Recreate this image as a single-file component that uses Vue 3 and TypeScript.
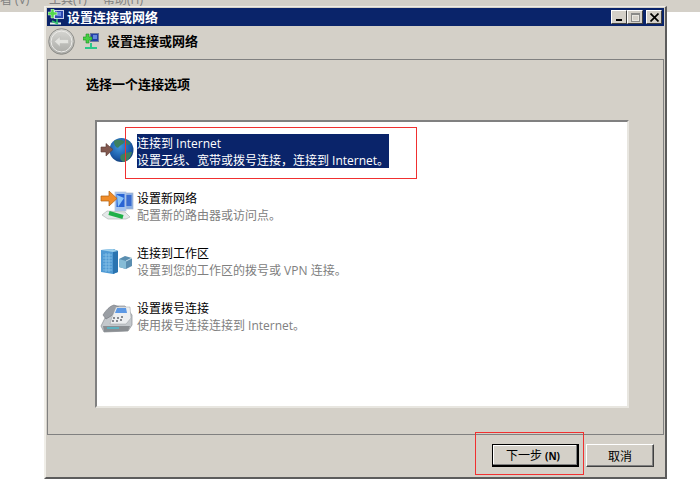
<script setup lang="ts">
interface ConnectOption {
  key: string
  title: string
  desc: string
  selected?: boolean
}

const options: ConnectOption[] = [
  { key: 'internet', title: '连接到 Internet', desc: '设置无线、宽带或拨号连接，连接到 Internet。', selected: true },
  { key: 'network', title: '设置新网络', desc: '配置新的路由器或访问点。' },
  { key: 'work', title: '连接到工作区', desc: '设置到您的工作区的拨号或 VPN 连接。' },
  { key: 'dial', title: '设置拨号连接', desc: '使用拨号连接连接到 Internet。' },
]
</script>

<template>
  <div class="desktop">
    <div class="menubar">
      <span>看 (V)</span>
      <span>工具(T)</span>
      <span>帮助(H)</span>
    </div>

    <div class="window">
      <div class="titlebar">
        <svg class="title-icon" width="16" height="16" viewBox="0 0 16 16">
          <rect x="6.5" y="1.5" width="9" height="8" fill="#2c48b0" stroke="#c8d0e8" />
          <rect x="9" y="3" width="4" height="4" fill="#6a8ce0" />
          <path d="M3 0h3v3h3v3H6v3H3V6H0V3h3z" fill="#52d84c" stroke="#fff" stroke-width=".5" />
          <path d="M2 14.5h11" stroke="#e8f4ec" stroke-width="2" />
          <path d="M9 10v4M4 12l6 3" stroke="#34c070" stroke-width="1.6" />
        </svg>
        <span class="title-text">设置连接或网络</span>
        <div class="caption-btns">
          <button class="caption-btn"><i class="glyph-min"></i></button>
          <button class="caption-btn"><i class="glyph-max"></i></button>
          <button class="caption-btn close">
            <svg width="9" height="9" viewBox="0 0 9 9"><path d="M.5.5l8 8M8.5.5l-8 8" stroke="#000" stroke-width="1.7" /></svg>
          </button>
        </div>
      </div>

      <div class="navrow">
        <svg class="back" width="27" height="27" viewBox="0 0 27 27">
          <defs>
            <linearGradient id="backFill" x1="0" y1="0" x2="0" y2="1">
              <stop offset="0" stop-color="#d8d8d4" />
              <stop offset="1" stop-color="#aaaaa6" />
            </linearGradient>
          </defs>
          <circle cx="13.5" cy="13.5" r="12.8" fill="url(#backFill)" stroke="#8c8c88" />
          <circle cx="13.5" cy="13.5" r="10.4" fill="none" stroke="#ecebe8" />
          <path d="M6.5 13.5l5.5-5v3h8.5v4H12v3z" fill="#e4e4e0" stroke="#bdbdb9" stroke-width=".5" />
        </svg>
        <svg class="nav-icon" width="16" height="16" viewBox="0 0 16 16">
          <rect x="7.5" y=".5" width="8" height="8" fill="#2440a8" stroke="#6c7a9c" />
          <rect x="10" y="2" width="4" height="4" fill="#6488dc" />
          <path d="M3 1h3v3h3v3H6v3H3V7H0V4h3z" fill="#46d044" stroke="#1f8a22" stroke-width=".6" />
          <path d="M2 15h12" stroke="#2cc888" stroke-width="2" />
          <path d="M8 10v4" stroke="#2cc888" stroke-width="2" />
        </svg>
        <span class="nav-title">设置连接或网络</span>
      </div>

      <div class="panel">
        <h2 class="heading">选择一个连接选项</h2>
        <div class="listbox">
          <div v-for="opt in options" :key="opt.key" class="option">
            <svg v-if="opt.key === 'internet'" class="opt-icon" width="36" height="36" viewBox="0 0 36 36">
              <defs>
                <radialGradient id="globe" cx=".42" cy=".36" r=".72">
                  <stop offset="0" stop-color="#3f96dc" />
                  <stop offset=".65" stop-color="#1a5aa8" />
                  <stop offset="1" stop-color="#0f3468" />
                </radialGradient>
              </defs>
              <circle cx="21.5" cy="16" r="12" fill="url(#globe)" />
              <path d="M14 7c4-2 7-1 10 0 1 3-3 3-5 6-2 2-5-1-5-6zM21 21c3-2 7-3 11-3-1 5-4 9-8 10-3-1-5-4-3-7zM25 6c2 0 4 2 6 4l-4 1z" fill="#3c8060" />
              <path d="M1 13h5V9.500l7 6-7 6.500v-4H1z" fill="#80584e" stroke="#5a3a34" stroke-width=".6" />
            </svg>
            <svg v-else-if="opt.key === 'network'" class="opt-icon" width="36" height="36" viewBox="0 0 36 36">
              <rect x="24" y="4" width="9" height="16" fill="#8cb0e4" stroke="#a8b4c8" stroke-width=".7" />
              <rect x="25.500" y="6" width="6" height="11" fill="#3a6cd0" />
              <rect x="15" y="3" width="11" height="19" fill="#a4c4f0" stroke="#b8c4d8" stroke-width=".7" />
              <rect x="16.500" y="5" width="8" height="13" fill="#2a64d4" />
              <path d="M17 6l7 3-6 9z" fill="#8cc4f8" />
              <path d="M1 7h8V2l8 7.500L9 17v-5H1z" fill="#f08c28" stroke="#b0600e" stroke-width=".7" />
              <path d="M2 26l5-4 18 1 5 5-4 2H8z" fill="#e4e8e8" stroke="#a8acac" stroke-width=".6" />
              <path d="M9 24l14 4" stroke="#20b048" stroke-width="4" />
            </svg>
            <svg v-else-if="opt.key === 'work'" class="opt-icon" width="36" height="36" viewBox="0 0 36 36">
              <path d="M1 6l12-1 5 2v21l-5 2-12-2z" fill="#4f9ad4" />
              <path d="M13 5l5 2v21l-5 2z" fill="#2a74b0" />
              <path d="M1 6l12-1 5 2-5 1z" fill="#9cd0ec" />
              <path d="M3 11h9M3 14h9M3 17h9M3 20h9M3 23h9M3 26h9M6 9v19M9 9v19" stroke="#8cc4e8" stroke-width=".8" />
              <path d="M19 15l6-3 7 2v8l-6 3-7-2z" fill="#5a8eb0" />
              <path d="M19 15l7 2v8l-7-2z" fill="#86bcd6" />
              <path d="M26 17l6-3" stroke="#c8e0ec" />
            </svg>
            <svg v-else class="opt-icon" width="36" height="36" viewBox="0 0 36 36">
              <path d="M1 27l6-12 8-8h10l7 9v10l-4 6-24 1z" fill="#c4c8cc" stroke="#8a8e92" stroke-width=".7" />
              <path d="M3 16c3-5 7-9 11-10l5 2-8 9-5 3z" fill="#9a9ea4" stroke="#70747a" stroke-width=".6" />
              <path d="M12 18l4-10h14l1 11-5 6H10z" fill="#eceef0" stroke="#9a9ea2" stroke-width=".5" />
              <path d="M17 9h9l1 5H15z" fill="#5c98e4" />
              <path d="M13 19h2M17 19h2M21 18h2M12 22h2M16 22h2M20 21h2" stroke="#666a70" stroke-width="1.3" />
              <path d="M3 27h27l-2 5-24 1z" fill="#8a8e92" />
              <path d="M7 29h12" stroke="#48c0d4" stroke-width="1.4" />
            </svg>
            <div class="opt-text" :class="{ selected: opt.selected }">
              <div class="opt-title">{{ opt.title }}</div>
              <div class="opt-desc">{{ opt.desc }}</div>
            </div>
          </div>
        </div>
      </div>

      <div class="footer">
        <button class="btn default">下一步 <span class="hotkey">(N)</span></button>
        <button class="btn">取消</button>
      </div>
    </div>

    <div class="mark mark-option"></div>
    <div class="mark mark-next"></div>
  </div>
</template>

<style>
html,
body {
  margin: 0;
  background: #fff;
}
</style>

<style scoped>
.desktop {
  position: relative;
  width: 700px;
  height: 486px;
  overflow: hidden;
  background: #fff;
  font-family: "Open Sans", "Noto Sans CJK SC", sans-serif;
  font-size: 12px;
  color: #000;
}

.menubar {
  height: 12px;
  background: #d4d0c8;
  display: flex;
  overflow: hidden;
  color: #808080;
  line-height: 12px;
}

.menubar span {
  position: relative;
  top: -6px;
  white-space: nowrap;
}

.menubar span:nth-child(1) {
  width: 49px;
}

.menubar span:nth-child(2) {
  width: 54px;
}

.window {
  position: absolute;
  left: 44px;
  top: 6px;
  width: 623px;
  height: 473px;
  box-sizing: border-box;
  display: flex;
  flex-direction: column;
  background: #d4d0c8;
  border-top: 1px solid #f0eee8;
  border-left: 2px solid #f0eee8;
  border-right: 2px solid #5c5c5c;
  border-bottom: 2px solid #5c5c5c;
  padding: 1px 1px 0 1px;
}

.titlebar {
  height: 18px;
  background: #0a246a;
  display: flex;
  align-items: center;
  padding-right: 2px;
  flex: none;
}

.title-icon {
  flex: none;
  margin-left: 1px;
}

.title-text {
  margin-left: 3px;
  color: #fff;
  font-size: 13px;
  line-height: 16px;
  font-weight: 700;
}

.caption-btns {
  margin-left: auto;
  display: flex;
}

.caption-btn {
  width: 16px;
  height: 14px;
  padding: 0;
  box-sizing: border-box;
  background: #d4d0c8;
  border: 1px solid;
  border-color: #fff #404040 #404040 #fff;
  display: flex;
  align-items: center;
  justify-content: center;
}

.caption-btn.close {
  margin-left: 3px;
}

.glyph-min {
  display: block;
  width: 6px;
  height: 2px;
  background: #000;
  margin-top: 6px;
}

.glyph-max {
  display: block;
  width: 9px;
  height: 9px;
  box-sizing: border-box;
  border: 1px solid #8a8a88;
  border-top-width: 2px;
  box-shadow: inset 0 0 0 1px #e8e6e0;
}

.navrow {
  height: 33px;
  flex: none;
  box-sizing: border-box;
  display: flex;
  align-items: center;
  padding: 0 0 3px 1px;
}

.back,
.nav-icon,
.opt-icon {
  display: block;
  flex: none;
}

.nav-icon {
  margin-left: 8px;
}

.nav-title {
  margin-left: 8px;
  font-size: 13px;
  line-height: 16px;
  font-weight: 700;
}

.panel {
  height: 376px;
  width: 617px;
  flex: none;
  box-sizing: border-box;
  border: 1px solid #808080;
  padding: 16px 0 0 47px;
  display: flex;
  flex-direction: column;
}

.heading {
  margin: 0 0 28px -9px;
  font-size: 13px;
  line-height: 16px;
  font-weight: 700;
}

.listbox {
  height: 288px;
  width: 534px;
  box-sizing: border-box;
  border: 2px solid;
  border-color: #808080 #e8e6e0 #e8e6e0 #808080;
  background: #fff;
  padding: 12px 0 0 3px;
  display: flex;
  flex-direction: column;
  gap: 21px;
}

.option {
  display: flex;
  align-items: flex-start;
  height: 34px;
}

.opt-icon {
  margin-right: 1px;
}

.opt-text {
  height: 34px;
  box-sizing: border-box;
  padding-top: 1px;
  line-height: 17px;
  color: #808080;
}

.opt-title {
  color: #000;
}

.opt-text.selected {
  background: #0a246a;
  color: #fff;
}

.opt-text.selected .opt-title {
  color: #fff;
}

.footer {
  flex: 1;
  display: flex;
  justify-content: flex-end;
  align-items: flex-start;
  gap: 7px;
  padding: 9px 10px 0 0;
}

.btn {
  height: 23px;
  width: 68px;
  box-sizing: border-box;
  padding: 0;
  background: #d4d0c8;
  font: inherit;
  border: 1px solid;
  border-color: #fff #404040 #404040 #fff;
  box-shadow: inset -1px -1px 0 #808080;
}

.btn.default {
  width: 87px;
  padding-right: 4px;
  border: 2px solid #000;
  border-top-width: 1px;
  border-left-width: 1px;
  box-shadow: inset -1px -1px 0 #808080, inset 1px 1px 0 #fff;
}

.hotkey {
  font-size: 10px;
  font-weight: 700;
}

.mark {
  position: absolute;
  box-sizing: border-box;
  border: 1px solid #f03030;
}

.mark-option {
  left: 125px;
  top: 127px;
  width: 292px;
  height: 52px;
}

.mark-next {
  left: 475px;
  top: 432px;
  width: 109px;
  height: 43px;
}
</style>
